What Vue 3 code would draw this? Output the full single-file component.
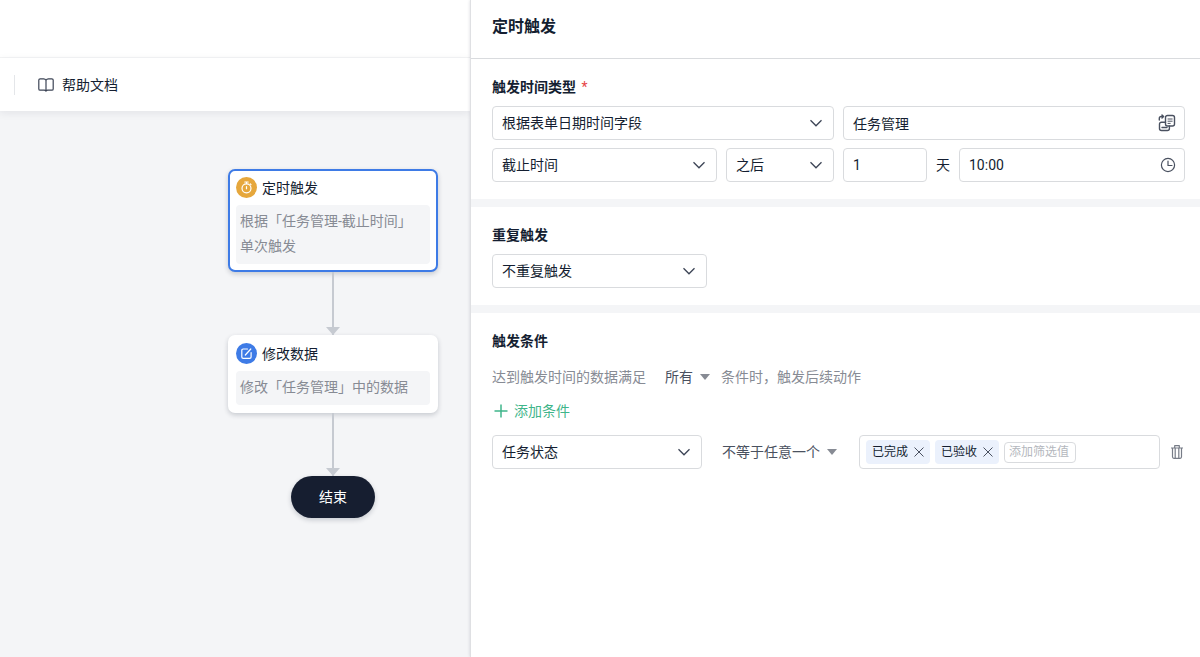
<script setup>
import { ref } from 'vue'

const timeType = ref('根据表单日期时间字段')
const formName = ref('任务管理')
const dateField = ref('截止时间')
const direction = ref('之后')
const amount = ref('1')
const time = ref('10:00')
const repeat = ref('不重复触发')
const match = ref('所有')
const conditionField = ref('任务状态')
const operator = ref('不等于任意一个')
const tags = ref(['已完成', '已验收'])

function removeTag(tag) {
  tags.value = tags.value.filter((t) => t !== tag)
}
</script>

<template>
  <div class="page">
    <div class="workspace">
      <div class="topbar"></div>
      <nav class="toolbar">
        <a class="help" href="#help">
          <svg width="16" height="14" viewBox="0 0 16 14" fill="none" stroke="currentColor" stroke-width="1.2" stroke-linejoin="round" stroke-linecap="round" aria-hidden="true">
            <path d="M8 2.2C7.5 1.2 6.700 0.800 5.600 0.800H2.200C1.300 0.800 0.800 1.300 0.800 2.100V10.900C0.800 11.700 1.300 12.200 2.200 12.200H6.200C7 12.200 7.600 12.500 8 13.100C8.400 12.500 9 12.200 9.800 12.200H13.800C14.700 12.200 15.200 11.700 15.200 10.900V2.100C15.200 1.300 14.700 0.800 13.800 0.800H10.400C9.300 0.800 8.500 1.200 8 2.200ZM8 2.200V13" />
          </svg>
          帮助文档
        </a>
      </nav>
      <main class="canvas">
        <div class="flow">
          <article class="node active">
            <header class="node-head">
              <span class="badge amber">
                <svg width="21" height="21" viewBox="0 0 21 21" fill="none" stroke="#fff" stroke-width="1.2" stroke-linecap="round" aria-hidden="true">
                  <circle cx="10.500" cy="11.300" r="4.500" />
                  <path d="M8.800 5h3.400M10.500 5v1.600M10.500 9.500v2.200M14.300 6.900l.7.7" />
                </svg>
              </span>
              定时触发
            </header>
            <p class="node-body">根据「任务管理-截止时间」单次触发</p>
          </article>
          <div class="link"></div>
          <article class="node">
            <header class="node-head">
              <span class="badge blue">
                <svg width="21" height="21" viewBox="0 0 21 21" fill="none" stroke="#fff" stroke-width="1.200" stroke-linecap="round" stroke-linejoin="round" aria-hidden="true">
                  <path d="M11.500 6H7.200C6.300 6 5.800 6.500 5.800 7.300V14C5.800 14.800 6.300 15.300 7.200 15.300H13.700C14.600 15.300 15.100 14.800 15.100 14V9.500M9.300 12L14.800 6" />
                </svg>
              </span>
              修改数据
            </header>
            <p class="node-body">修改「任务管理」中的数据</p>
          </article>
          <div class="link"></div>
          <div class="end">结束</div>
        </div>
      </main>
    </div>

    <aside class="drawer">
      <header class="drawer-head"><h1>定时触发</h1></header>

      <section class="block times">
        <h2>触发时间类型 <span class="required">*</span></h2>
        <div class="pair">
          <div class="field">
            <select v-model="timeType" aria-label="触发时间类型"><option>根据表单日期时间字段</option></select>
            <svg class="chevron" viewBox="0 0 14 8"><path d="M1.500 1.300L7 6.800L12.500 1.300" /></svg>
          </div>
          <div class="field">
            <input v-model="formName" type="text" aria-label="表单" />
            <svg class="glyph form" width="18" height="18" viewBox="0 0 18 18" fill="none" stroke="currentColor" stroke-width="1.400" stroke-linecap="round" stroke-linejoin="round" aria-hidden="true">
              <rect x="7.500" y="1.500" width="9" height="10.500" rx="2" />
              <path d="M4 13.500h5M7.500 8.300H3.500C2.300 8.300 1.500 9.100 1.500 10.200V14.600C1.500 15.700 2.300 16.500 3.500 16.500H9.400C10.500 16.500 11.400 15.700 11.400 14.600V12M1.300 6V4.500C1.300 3.200 2 2.500 3.200 2.500H5.200M4 .9L5.600 2.500L4 4.100" />
              <path d="M10 5h4.200M10 7.200h4.200M10 9.400h2.200" stroke-width="1" />
            </svg>
          </div>
        </div>
        <div class="pair">
          <div class="group">
            <div class="field grow">
              <select v-model="dateField" aria-label="日期字段"><option>截止时间</option></select>
              <svg class="chevron" viewBox="0 0 14 8"><path d="M1.500 1.300L7 6.800L12.500 1.300" /></svg>
            </div>
            <div class="field direction">
              <select v-model="direction" aria-label="之前或之后"><option>之后</option></select>
              <svg class="chevron" viewBox="0 0 14 8"><path d="M1.500 1.300L7 6.800L12.500 1.300" /></svg>
            </div>
          </div>
          <div class="group">
            <div class="field amount"><input id="amount" v-model="amount" type="text" /></div>
            <label for="amount">天</label>
            <div class="field grow">
              <input v-model="time" type="text" aria-label="时间" />
              <svg class="glyph" width="16" height="16" viewBox="0 0 16 16" fill="none" stroke="currentColor" stroke-width="1.200" stroke-linecap="round" stroke-linejoin="round" aria-hidden="true">
                <circle cx="8" cy="8" r="6.600" /><path d="M8 4v4.500h4" />
              </svg>
            </div>
          </div>
        </div>
      </section>

      <section class="block">
        <h2>重复触发</h2>
        <div class="field repeat">
          <select v-model="repeat" aria-label="重复触发"><option>不重复触发</option></select>
          <svg class="chevron" viewBox="0 0 14 8"><path d="M1.500 1.300L7 6.800L12.500 1.300" /></svg>
        </div>
      </section>

      <section class="block">
        <h2>触发条件</h2>
        <p class="sentence">
          <span class="lead">达到触发时间的数据满足</span>
          <span class="inline-select">
            <select v-model="match" aria-label="满足方式"><option>所有</option></select>
            <i class="caret"></i>
          </span>
          <span>条件时，触发后续动作</span>
        </p>
        <button class="add" type="button">
          <svg width="14" height="14" viewBox="0 0 14 14" stroke="currentColor" stroke-width="1.500" aria-hidden="true"><path d="M7 .5v13M.5 7h13" /></svg>
          添加条件
        </button>
        <div class="condition">
          <div class="field cond-field">
            <select v-model="conditionField" aria-label="条件字段"><option>任务状态</option></select>
            <svg class="chevron" viewBox="0 0 14 8"><path d="M1.500 1.300L7 6.800L12.500 1.300" /></svg>
          </div>
          <span class="inline-select operator">
            <select v-model="operator" aria-label="条件关系"><option>不等于任意一个</option></select>
            <i class="caret"></i>
          </span>
          <div class="values">
            <span v-for="tag in tags" :key="tag" class="tag">
              {{ tag }}
              <button type="button" :aria-label="'移除' + tag" @click="removeTag(tag)">
                <svg width="10" height="10" viewBox="0 0 10 10" stroke="currentColor" stroke-width="1"><path d="M.5.5l9 9M9.500.5l-9 9" /></svg>
              </button>
            </span>
            <input type="text" placeholder="添加筛选值" aria-label="添加筛选值" />
          </div>
          <button class="trash" type="button" aria-label="删除条件">
            <svg width="12" height="14" viewBox="0 0 12 14" fill="none" stroke="currentColor" stroke-width="1.200" stroke-linejoin="round" aria-hidden="true">
              <path d="M0 3h12M3.700 2.800V.7h4.600v2.100M1.500 3v8.800c0 1 .5 1.500 1.400 1.500h6.200c.9 0 1.400-.5 1.400-1.500V3M4.200 3v10M7.800 3v10" />
            </svg>
          </button>
        </div>
      </section>
    </aside>
  </div>
</template>

<style>
body {
  margin: 0;
}
</style>

<style scoped>
.page {
  display: flex;
  min-height: 100vh;
  background: #f4f5f7;
  color: #141e31;
  font-family: Roboto, "Noto Sans CJK SC", sans-serif;
  font-size: 14px;
  line-height: 20px;
}
.page * {
  box-sizing: border-box;
}
button,
input,
select {
  margin: 0;
  padding: 0;
  border: 0;
  background: none;
  color: inherit;
  font: inherit;
  outline: none;
}
select {
  appearance: none;
  cursor: pointer;
}
button {
  cursor: pointer;
}

.workspace {
  display: flex;
  flex: 1;
  flex-direction: column;
  min-width: 0;
}
.topbar {
  height: 58px;
  border-bottom: 1px solid #f4f5f6;
  background: #fff;
}
.toolbar {
  display: flex;
  align-items: center;
  height: 53px;
  padding-left: 14px;
  background: #fff;
  box-shadow: 0 2px 8px rgba(20, 30, 49, 0.08);
}
.help {
  display: flex;
  align-items: center;
  gap: 8px;
  padding-left: 23px;
  border-left: 1px solid #e4e6e9;
  color: #141e31;
  text-decoration: none;
}
.help svg {
  color: #3c4455;
}
.canvas {
  display: flex;
  flex: 1;
  justify-content: flex-end;
  padding: 58px 32px 32px;
}
.flow {
  display: flex;
  flex-direction: column;
  align-items: center;
  width: 210px;
}
.node {
  width: 100%;
  padding: 6px;
  border: 2px solid #fff;
  border-radius: 7px;
  background: #fff;
  box-shadow: 0 2px 5px rgba(20, 30, 49, 0.2);
}
.node.active {
  border-color: #3e7be6;
}
.node-head {
  display: flex;
  align-items: center;
  gap: 5px;
  height: 21px;
}
.badge {
  display: flex;
  width: 21px;
  height: 21px;
  border-radius: 50%;
}
.amber {
  background: #e6a73c;
}
.blue {
  background: #3e7be6;
}
.node-body {
  margin: 7px 0 0;
  padding: 4px 12px 5px 4px;
  border-radius: 4px;
  background: #f4f5f7;
  color: #878b94;
  line-height: 25px;
}
.link {
  position: relative;
  width: 2px;
  height: 63px;
  background: #c6cad1;
}
.link::after {
  position: absolute;
  bottom: 0;
  left: -6px;
  border-top: 8px solid #c6cad1;
  border-right: 7px solid transparent;
  border-left: 7px solid transparent;
  content: "";
}
.end {
  width: 84px;
  border-radius: 21px;
  background: #161e30;
  box-shadow: 0 2px 5px rgba(20, 30, 49, 0.2);
  color: #fff;
  line-height: 42px;
  text-align: center;
}

.drawer {
  position: relative;
  flex: none;
  width: 730px;
  max-width: 75%;
  border-left: 1px solid #dfe0e3;
  background: #fff;
  box-shadow: 0 0 3px rgba(20, 30, 49, 0.16);
}
.drawer-head {
  padding: 15px 21px 19px;
  border-bottom: 1px solid #d9dbde;
}
h1 {
  margin: 0;
  font-size: 16px;
  font-weight: 700;
  line-height: 24px;
}
h2 {
  margin: 0 0 9px;
  font-size: 14px;
  font-weight: 700;
  line-height: 20px;
}
.required {
  margin-left: 2px;
  color: #e64545;
  font-weight: 400;
}
.block {
  padding: 18px 15px 17px 21px;
}
.block + .block {
  border-top: 8px solid #f4f5f7;
}
.pair {
  display: grid;
  grid-template-columns: 1fr 1fr;
  gap: 9px;
}
.pair + .pair {
  margin-top: 8px;
}
.group {
  display: flex;
  align-items: center;
  gap: 9px;
}
.field {
  display: flex;
  position: relative;
  align-items: center;
  height: 34px;
  border: 1px solid #d9dbde;
  border-radius: 4px;
}
.field select,
.field input {
  width: 100%;
  min-width: 0;
  height: 32px;
  padding: 0 9px;
}
.field select {
  padding-right: 32px;
}
.grow {
  flex: 1;
}
.direction {
  width: 108px;
}
.amount {
  width: 84px;
}
.repeat {
  width: 215px;
}
.cond-field {
  width: 210px;
}
.chevron {
  position: absolute;
  right: 10px;
  width: 14px;
  height: 8px;
  fill: none;
  stroke: #3c4455;
  stroke-width: 1.3;
  pointer-events: none;
}
.glyph {
  flex: none;
  margin-right: 8px;
  color: #4a5160;
}
.sentence {
  display: flex;
  gap: 11px;
  margin: 16px 0 0;
  color: #878b94;
}
.lead {
  min-width: 162px;
}
.inline-select {
  display: flex;
  position: relative;
  align-items: center;
  color: #4a5160;
}
.inline-select select {
  padding-right: 17px;
}
.caret {
  position: absolute;
  right: 0;
  border-top: 6px solid #878b94;
  border-right: 5px solid transparent;
  border-left: 5px solid transparent;
  pointer-events: none;
}
.add {
  display: flex;
  align-items: center;
  gap: 6px;
  margin: 14px 0;
  padding-left: 2px;
  color: #3fb58a;
}
.condition {
  display: flex;
  align-items: center;
}
.operator {
  margin: 0 22px 0 20px;
}
.values {
  display: flex;
  flex: 1;
  align-items: center;
  gap: 5px;
  min-width: 0;
  height: 34px;
  padding: 0 6px;
  border: 1px solid #d9dbde;
  border-radius: 4px;
  font-size: 12px;
}
.tag {
  display: flex;
  flex: none;
  align-items: center;
  gap: 6px;
  height: 24px;
  padding: 0 6px;
  border-radius: 4px;
  background: #ebf1fc;
}
.tag button {
  display: flex;
  color: #4a5160;
}
.values input {
  width: 72px;
  height: 21px;
  padding: 0 4px;
  border: 1px solid #d9dbde;
  border-radius: 4px;
}
.values input::placeholder {
  color: #b4b7bd;
  opacity: 1;
}
.trash {
  display: flex;
  margin: 0 2px 0 11px;
  color: #777c87;
}
</style>
